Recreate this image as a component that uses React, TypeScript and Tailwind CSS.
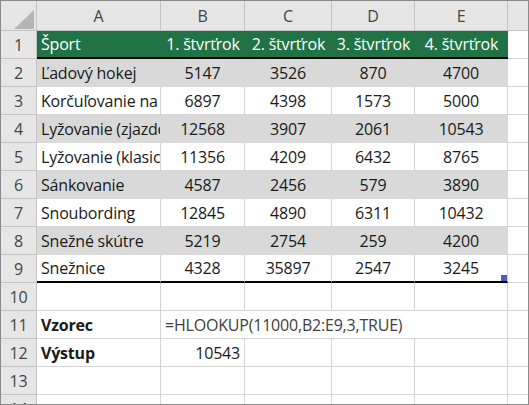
import React from 'react';

const rows: [string, number, number, number, number][] = [
  ['Ľadový hokej', 5147, 3526, 870, 4700],
  ['Korčuľovanie na rýchlosť', 6897, 4398, 1573, 5000],
  ['Lyžovanie (zjazdové)', 12568, 3907, 2061, 10543],
  ['Lyžovanie (klasické)', 11356, 4209, 6432, 8765],
  ['Sánkovanie', 4587, 2456, 579, 3890],
  ['Snoubording', 12845, 4890, 6311, 10432],
  ['Snežné skútre', 5219, 2754, 259, 4200],
  ['Snežnice', 4328, 35897, 2547, 3245],
];

const cols = ['A', 'B', 'C', 'D', 'E'];
const quarters = ['1. štvrťrok', '2. štvrťrok', '3. štvrťrok', '4. štvrťrok'];

function RowHead({ n }: { n: number }) {
  return (
    <div className="flex items-center justify-center bg-[#e6e6e6] border-r border-b border-[#c4c4c4] text-[#444]">
      {n}
    </div>
  );
}

function Cell({ className = '', children }: { className?: string; children?: React.ReactNode }) {
  return (
    <div className={`flex items-center whitespace-nowrap overflow-hidden border-r border-b border-[#d4d4d4] ${className}`}>
      {children}
    </div>
  );
}

export default function App() {
  return (
    <div className="w-[529px] h-[405px] overflow-hidden bg-white border border-[#8a8a8a] font-['Open_Sans',sans-serif] text-[16px] tracking-[-0.2px] text-[#1a1a1a]">
      <div className="grid grid-cols-[36px_124px_84px_87px_83px_93px_1fr] grid-rows-[30px] auto-rows-[28px]">
        {/* column headers */}
        <div className="relative bg-[#e6e6e6] border-r border-b border-[#c4c4c4]">
          <svg className="absolute left-[13px] top-[9px]" width="20" height="19" viewBox="0 0 20 19">
            <polygon points="20,0 20,19 0,19" fill="#b5b5b5" />
          </svg>
        </div>
        {cols.map(c => (
          <div key={c} className="flex items-center justify-center bg-[#e6e6e6] border-r border-b border-[#c4c4c4] text-[#444]">
            {c}
          </div>
        ))}
        <div className="bg-[#e6e6e6] border-b border-[#c4c4c4]" />

        {/* row 1: header */}
        <RowHead n={1} />
        <div className="flex items-center pl-1 bg-[#217346] text-white border-b-2 border-black">Šport</div>
        {quarters.map(q => (
          <div key={q} className="flex items-center justify-center whitespace-nowrap bg-[#217346] text-white border-b-2 border-black">
            {q}
          </div>
        ))}
        <Cell className="border-r-0" />

        {/* data rows */}
        {rows.map((r, i) => {
          const gray = i % 2 === 0;
          const last = i === rows.length - 1;
          const bg = gray ? 'bg-[#d9d9d9] border-r-[#d9d9d9] border-b-[#d9d9d9]' : '';
          const bottom = last ? 'border-b-2 border-b-black' : '';
          return (
            <React.Fragment key={r[0]}>
              <RowHead n={i + 2} />
              <Cell className={`pl-1 ${bg} ${bottom}`}>{r[0]}</Cell>
              {r.slice(1).map((v, j) => (
                <Cell key={j} className={`relative justify-center ${bg} ${bottom}`}>
                  {v}
                  {last && j === 3 && (
                    <span className="absolute right-0 bottom-0 w-[6px] h-[6px] bg-[#4a5ec4]" />
                  )}
                </Cell>
              ))}
              <Cell className="border-r-0" />
            </React.Fragment>
          );
        })}

        {/* row 10 */}
        <RowHead n={10} />
        <Cell /><Cell /><Cell /><Cell /><Cell /><Cell className="border-r-0" />

        {/* row 11 */}
        <RowHead n={11} />
        <Cell className="pl-1 font-bold">Vzorec</Cell>
        <div className="col-span-4 flex items-center pl-1 whitespace-nowrap border-r border-b border-[#d4d4d4] text-[#404040]">
          =HLOOKUP(11000,B2:E9,3,TRUE)
        </div>
        <Cell className="border-r-0" />

        {/* row 12 */}
        <RowHead n={12} />
        <Cell className="pl-1 font-bold">Výstup</Cell>
        <Cell className="justify-end pr-1">10543</Cell>
        <Cell /><Cell /><Cell /><Cell className="border-r-0" />

        {/* rows 13-14 */}
        {[13, 14].map(n => (
          <React.Fragment key={n}>
            <RowHead n={n} />
            <Cell /><Cell /><Cell /><Cell /><Cell /><Cell className="border-r-0" />
          </React.Fragment>
        ))}
      </div>
    </div>
  );
}
